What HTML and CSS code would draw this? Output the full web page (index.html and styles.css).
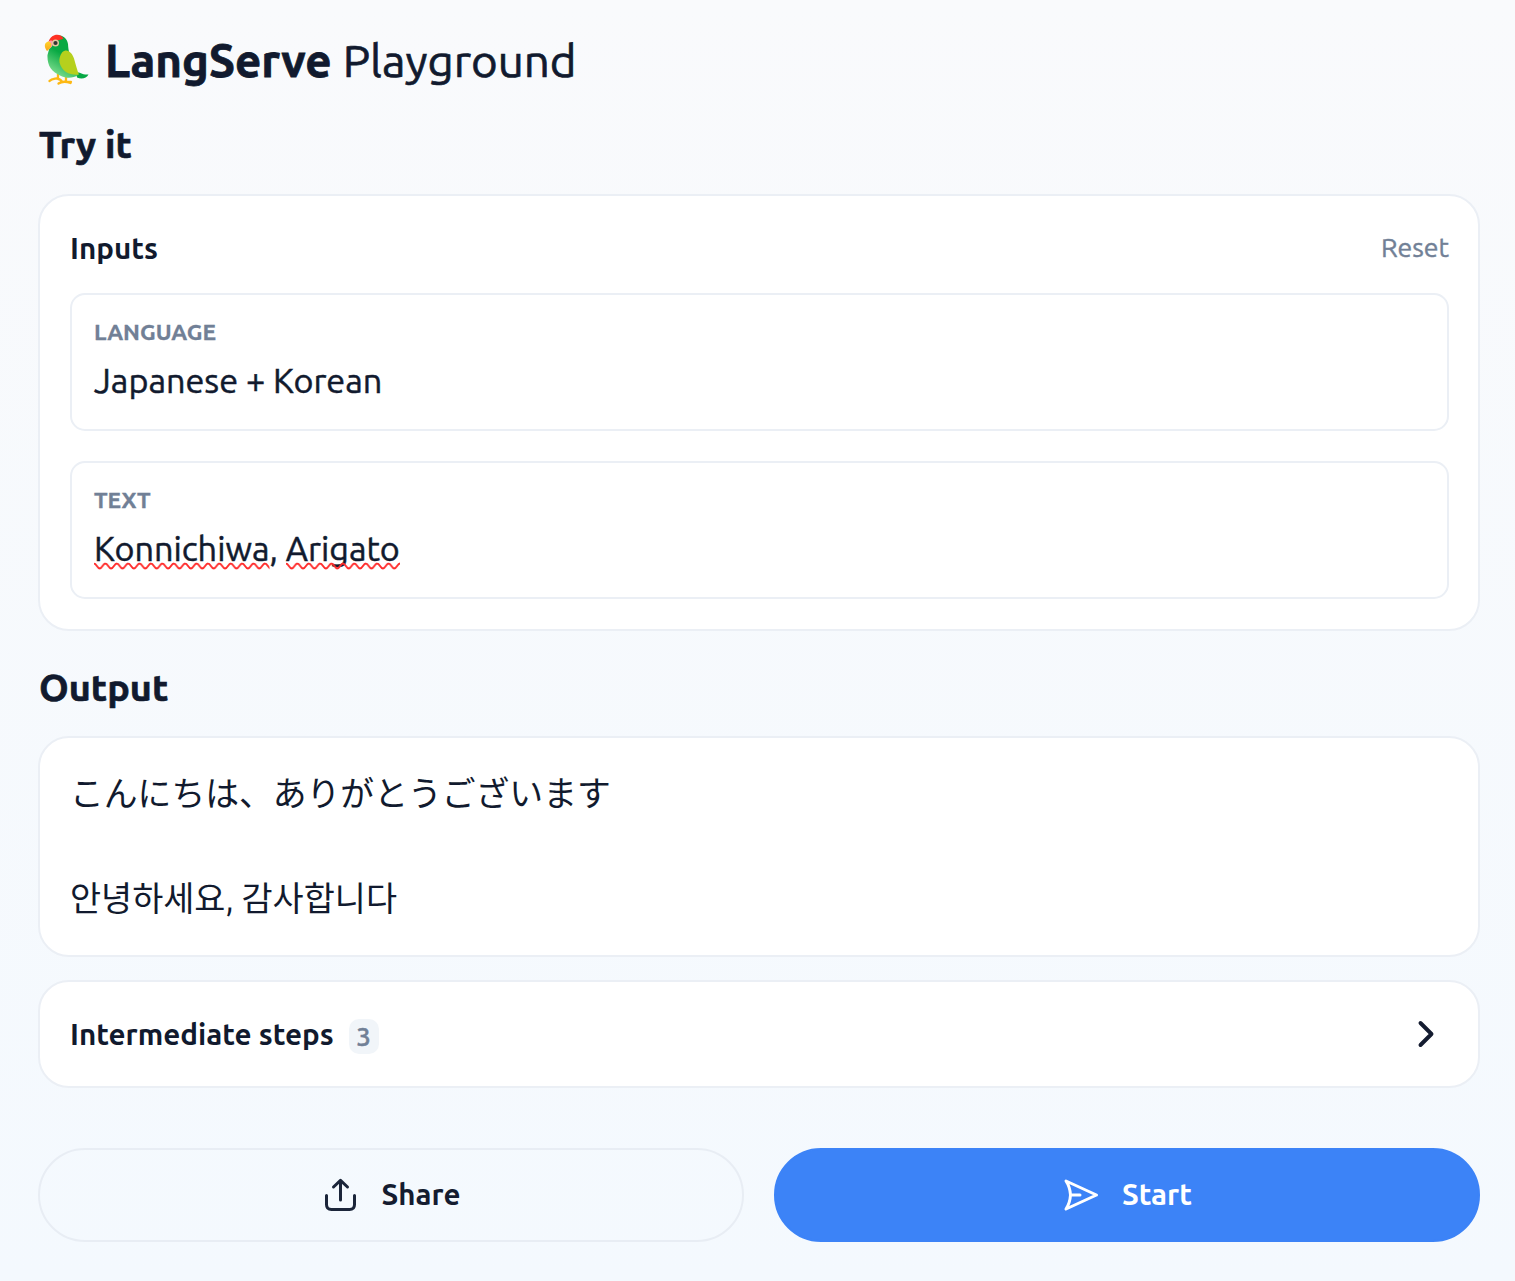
FILE: index.html
```html
<!DOCTYPE html>
<html lang="en">
<head>
<meta charset="utf-8">
<title>LangServe Playground</title>
<link rel="stylesheet" href="styles.css">
</head>
<body>
<main class="page">
  <h1 class="title">
    <svg class="parrot" width="50" height="52" viewBox="0 0 50 52" aria-hidden="true">
      <defs>
        <linearGradient id="body" x1="0.7" y1="0.2" x2="0.35" y2="1"><stop offset="0.35" stop-color="#08a943"/><stop offset="1" stop-color="#82df91"/></linearGradient>
        <linearGradient id="beak" x1="0" y1="0" x2="0" y2="1"><stop offset="0" stop-color="#ffd52b"/><stop offset="1" stop-color="#f9a51a"/></linearGradient>
      </defs>
      <path d="M14 44c-3 1-6 0-8.500 3M14 44v-4M14 45c2 0 3 1 4 3M22 48v-6M14.500 49.500c3-2 8-2 12-.5M22 48h5" fill="none" stroke="#fdb813" stroke-width="2.300" stroke-linecap="round"/>
      <path d="M32 38c4 0 6 3 12.500 2.500-2 4-7 5-11.500 3Z" fill="#06a844"/>
      <path d="M8 3C14-1 23 2 24 10c.5 7 1 9 4 14l6 17c-4 3-11 4-17 1C7 38 3 31 3.500 21L6 12Z" fill="url(#body)"/>
      <path d="M18 18.500c5-5 10 0 12 6 2 7 3 11 5 16-8 1-17-2-19.500-12-.5-4 .5-7 2.500-10Z" fill="#b6d01d"/>
      <path d="M4.500 8C7-1 17-1 19.500 4.500 16 7 8 6 4.500 8Z" fill="#ff3124"/>
      <path d="M4 8c3-2 5-2 5 1 0 3-2 5-4 6Z" fill="#ff9ba9"/>
      <path d="M4 7.500C0 9 0 13 3 17 6 15 8 12 7 9.500 6.500 8 5 7.500 4 7.500Z" fill="url(#beak)"/>
      <circle cx="11.500" cy="9" r="3.500" fill="#e5c8a1"/><circle cx="11.500" cy="9" r="2.100" fill="#333"/>
    </svg>
    <span class="title-text"><strong class="brand">LangServe</strong> <span class="product">Playground</span></span>
  </h1>

  <h2 class="heading heading-try"><span>Try it</span></h2>
  <section class="card inputs">
    <div class="inputs-head">
      <h3 class="subheading inputs-label">Inputs</h3>
      <span class="reset">Reset</span>
    </div>
    <div class="field">
      <div class="field-label label-language">LANGUAGE</div>
      <div class="field-value value-language">Japanese + Korean</div>
    </div>
    <div class="field">
      <div class="field-label label-text">TEXT</div>
      <div class="field-value value-text"><span class="misspelt">Konnichiwa<svg class="squiggle" aria-hidden="true"><defs><pattern id="wave" width="11.4" height="8" patternUnits="userSpaceOnUse"><path d="M-2.850 4Q-1.400 1 0 1.500C2.500 1.500 3.200 6.500 5.700 6.500S8.900 1.500 11.400 1.500" fill="none" stroke="#ff2b2b" stroke-width="1.900"/></pattern></defs><rect width="100%" height="8" fill="url(#wave)"/></svg></span>, <span class="misspelt">Arigato<svg class="squiggle" aria-hidden="true"><rect width="100%" height="8" fill="url(#wave)"/></svg></span></div>
    </div>
  </section>

  <h2 class="heading heading-output"><span>Output</span></h2>
  <section class="card output">
    <p class="answer" lang="ja">こんにちは、ありがとうございます</p>
    <p class="answer answer-ko" lang="ko">안녕하세요, 감사합니다</p>
  </section>

  <section class="card steps">
    <h3 class="subheading steps-label">Intermediate steps</h3>
    <span class="count">3</span>
    <svg class="chevron" width="20" height="32" viewBox="0 0 20 32" aria-hidden="true"><path d="M4.500 5 15.500 16 4.500 27" fill="none" stroke="#141c30" stroke-width="3.900" stroke-linecap="round" stroke-linejoin="round"/></svg>
  </section>

  <div class="actions">
    <button class="button share">
      <svg width="36" height="36" viewBox="0 0 36 36" aria-hidden="true"><path d="M3.500 18.500v9q0 5 5 5h18q5 0 5-5v-9M17.500 23V3.500M10.500 10l7-6.700 7 6.700" fill="none" stroke="#1b253a" stroke-width="3" stroke-linecap="round" stroke-linejoin="round"/></svg>
      <span class="share-label">Share</span>
    </button>
    <button class="button start">
      <svg width="36" height="36" viewBox="0 0 36 36" aria-hidden="true"><path d="M3 4 33.500 18 3 32Q7 26 7.500 18 7 10 3 4ZM7.500 18H17" fill="none" stroke="#fff" stroke-width="3" stroke-linecap="round" stroke-linejoin="round"/></svg>
      <span class="start-label">Start</span>
    </button>
  </div>
</main>
</body>
</html>
```
FILE: styles.css
```css
* { box-sizing: border-box; }
body {
  margin: 0;
  min-height: 1281px;
  background: linear-gradient(#f9fafc, #f4f9fe);
  color: #111a2e;
  font-family: Ubuntu, "Noto Sans", "Noto Sans CJK JP", sans-serif;
  font-weight: 400;
}
h1, h2, h3, p { margin: 0; }
.page { display: flex; flex-direction: column; padding: 30px 35px 38px 38px; }
.title { display: flex; align-items: center; height: 60px; font-size: 45.700px; font-weight: 400; line-height: 60px; white-space: nowrap; }
.parrot { margin: 0 11px 0 6px; flex: none; }
.title-text { display: flex; gap: 11px; }
.brand { font-weight: 700; -webkit-text-stroke: 0.8px; }
.product { -webkit-text-stroke: 0.7px; }
.heading { padding-left: 1px; font-size: 37.800px; font-weight: 700; line-height: 48px; height: 48px; -webkit-text-stroke: 0.7px; }
.heading-try { margin-top: 30px; }
.heading-output { margin-top: 32px; }
.card { background: #fff; border: 2px solid #ebeff5; border-radius: 31px; }
.inputs { height: 437px; margin-top: 26px; padding: 30px 29px 30px 30px; display: flex; flex-direction: column; }
.inputs-head { display: flex; justify-content: space-between; align-items: center; height: 42px; margin-bottom: 25px; }
.subheading { padding-top: 2px; font-size: 29.600px; font-weight: 600; line-height: 40px; white-space: nowrap; }
.reset { font-size: 26.700px; line-height: 40px; color: #718096; -webkit-text-stroke: 0.4px; }
.field { height: 139px; padding: 21px 22px; border: 2px solid #ebeff5; border-radius: 15px; }
.field + .field { height: 139px; margin-top: 29.500px; }
.field-label { font-size: 22.700px; font-weight: 700; line-height: 32px; color: #718096; -webkit-text-stroke: 0.3px; }
.field-value { margin-top: 7px; font-size: 34.200px; line-height: 50px; white-space: nowrap; -webkit-text-stroke: 0.5px; }
.misspelt { position: relative; display: inline-block; }
.squiggle { position: absolute; left: 0; bottom: 3px; width: 100%; height: 8px; }
.output { height: 221px; margin-top: 25px; padding: 29px 30px; }
.answer { font-family: Ubuntu, "Noto Sans CJK JP", sans-serif; font-size: 33.800px; font-weight: 400; line-height: 52.500px; }
.answer-ko { margin-top: 52px; font-family: Ubuntu, "Noto Sans CJK KR", sans-serif; }
.steps { display: flex; align-items: center; height: 108px; margin-top: 23px; padding: 0 42px 0 30px; }
.steps-label { padding-top: 0; }
.count { margin: 5px 0 0 15px; width: 30px; height: 35px; border-radius: 10px; background: #f1f5f9; color: #718096; font-size: 26px; font-weight: 500; line-height: 35px; text-align: center; -webkit-text-stroke: 0.5px; }
.chevron { margin-left: auto; }
.actions { display: grid; grid-template-columns: 1fr 1fr; gap: 30px; margin-top: 60px; }
.button { display: flex; align-items: center; justify-content: center; gap: 23px; height: 94px; padding: 0 0 0 1px; border: 2px solid #e8edf4; border-radius: 47px; background: transparent; color: #141c30; font: 600 29.500px/40px Ubuntu, "Noto Sans", sans-serif; }
.start { border-color: #3c83f7; background: #3c83f7; color: #fff; }
```
